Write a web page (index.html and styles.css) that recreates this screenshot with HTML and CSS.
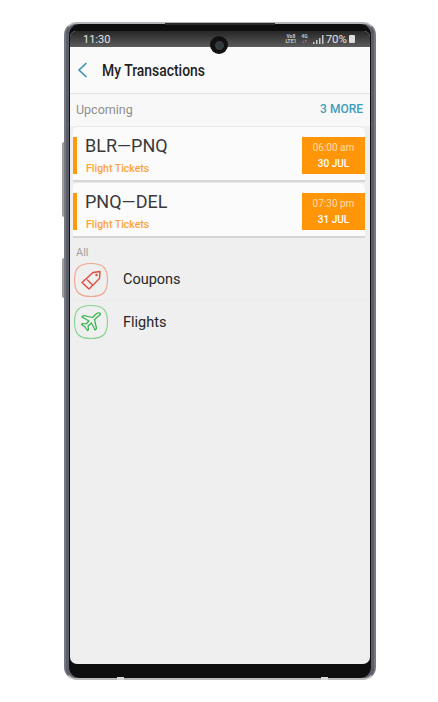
FILE: index.html
```html
<!DOCTYPE html>
<html lang="en">
<head>
  <meta charset="UTF-8" />
  <title>My Transactions</title>
  <meta name="viewport" content="width=device-width, initial-scale=1.0" />
  <link rel="stylesheet" href="styles.css">
</head>
<body>
  <div class="phone">
    <span class="side-key key-top"></span>
    <span class="side-key key-low"></span>
    <span class="top-slit"></span>
    <span class="band-tick tick-left"></span>
    <span class="band-tick tick-right"></span>
    <span class="camera"><span class="lens"></span></span>
    <div class="screen">
      <div class="status-bar">
        <span class="clock">11:30</span>
        <div class="status-icons">
          <span class="tiny">Vo8<br>LTE1</span>
          <span class="tiny">4G<br>↓↑</span>
          <svg class="signal" width="11" height="9" viewBox="0 0 11 9">
            <rect x="0" y="7" width="1.5" height="2" />
            <rect x="3" y="5" width="1.5" height="4" />
            <rect x="6" y="3" width="1.5" height="6" />
            <rect x="9" y="0" width="1.5" height="9" />
          </svg>
          <span class="battery-text">70%</span>
          <span class="battery"></span>
        </div>
      </div>

      <div class="app-header">
        <svg class="back" width="11" height="16" viewBox="0 0 11 16">
          <path d="M9.5 1 L2 8 L9.5 15" fill="none" stroke="#3d93b5" stroke-width="1.6" />
        </svg>
        <h1>My Transactions</h1>
      </div>

      <div class="upcoming-row">
        <span class="upcoming-label">Upcoming</span>
        <span class="more">3 MORE</span>
      </div>

      <div class="card">
        <span class="card-bar"></span>
        <div class="card-info">
          <div class="route">BLR—PNQ</div>
          <div class="kind">Flight Tickets</div>
        </div>
        <div class="when">
          <span class="time">06:00 am</span>
          <span class="date">30 JUL</span>
        </div>
      </div>
      <div class="card">
        <span class="card-bar"></span>
        <div class="card-info">
          <div class="route">PNQ—DEL</div>
          <div class="kind">Flight Tickets</div>
        </div>
        <div class="when">
          <span class="time">07:30 pm</span>
          <span class="date">31 JUL</span>
        </div>
      </div>

      <div class="all-section">
        <div class="all-label">All</div>
        <div class="category">
          <svg class="squircle" width="36" height="36" viewBox="0 0 36 36">
            <path d="M18 1.5 C30 1.5 34.5 6 34.5 18 C34.5 30 30 34.5 18 34.5 C6 34.5 1.5 30 1.5 18 C1.5 6 6 1.5 18 1.5 Z" fill="none" stroke="#eea68f" stroke-width="1.1" />
            <path d="M9 20.5 L20 10.5 L27 9.5 L26.5 16.5 L16 27 Z" fill="none" stroke="#df4b3c" stroke-width="1.4" stroke-linejoin="round" />
            <path d="M14 17.5 L19.5 23" fill="none" stroke="#df4b3c" stroke-width="1.2" />
            <circle cx="23.5" cy="13" r="1.2" fill="#df4b3c" />
          </svg>
          <span class="category-name">Coupons</span>
        </div>
        <div class="category">
          <svg class="squircle" width="36" height="36" viewBox="0 0 36 36">
            <path d="M18 1.5 C30 1.5 34.5 6 34.5 18 C34.5 30 30 34.5 18 34.5 C6 34.5 1.5 30 1.5 18 C1.5 6 6 1.5 18 1.5 Z" fill="none" stroke="#84d48f" stroke-width="1.1" />
            <path d="M27.5 9.5 C26 8.5 24 9 22.5 10.5 L19.5 13.5 L10.5 11.5 L9 13 L16 17 L13 20 L9.5 19.5 L8.5 20.5 L12 23 L14.5 26.5 L15.5 25.5 L15 22 L18.500 19 L22 26 L23.500 24.500 L21.500 15.500 L25 12.500 C26.500 11.500 28 10.500 27.500 9.500 Z" fill="none" stroke="#36b24d" stroke-width="1.2" stroke-linejoin="round" />
          </svg>
          <span class="category-name">Flights</span>
        </div>
      </div>
    </div>
  </div>
</body>
</html>
```

FILE: styles.css
```css
* {
  box-sizing: border-box;
  margin: 0;
  padding: 0;
}

body {
  font-family: Roboto, 'Liberation Sans', sans-serif;
  background: #ffffff;
  height: 702px;
  overflow: hidden;
  padding: 22px 0 0 64px;
}

.phone {
  position: relative;
  width: 312px;
  height: 658px;
  padding: 7px 4px 14px 4px;
  background: #0e0e0e;
  border: 2px solid #77797f;
  border-top-color: #b4b5b9;
  border-bottom-color: #b9b9b9;
  border-radius: 13px;
  box-shadow: inset 3px 0 0 #5c5f6b, inset -3px 0 0 #5c5f6b;
}

.side-key {
  position: absolute;
  left: -4px;
  width: 2px;
  background: #9a9ca1;
  border-radius: 2px 0 0 2px;
}

.key-top {
  top: 118px;
  height: 75px;
}

.key-low {
  top: 234px;
  height: 40px;
}

.top-slit {
  position: absolute;
  top: -1px;
  left: 99px;
  width: 110px;
  height: 2px;
  background: #2a2a2a;
}

.band-tick {
  position: absolute;
  bottom: -2px;
  width: 7px;
  height: 3px;
  background: #d8d8d8;
}

.tick-left {
  left: 51px;
}

.tick-right {
  left: 255px;
}

.camera {
  position: absolute;
  top: 12px;
  left: 144px;
  width: 18px;
  height: 18px;
  border-radius: 50%;
  background: #111;
  display: flex;
  align-items: center;
  justify-content: center;
}

.lens {
  width: 9px;
  height: 9px;
  border-radius: 50%;
  background: #2c3a42;
  border: 2px solid #3a3a3a;
}

.screen {
  height: 100%;
  background: #efefef;
  border-radius: 6px 6px 7px 7px;
  overflow: hidden;
}

.status-bar {
  height: 16px;
  padding: 0 15px 0 13px;
  display: flex;
  align-items: center;
  justify-content: space-between;
  background: linear-gradient(#262626, #5c5c5c);
  color: #e4e4e4;
}

.clock {
  font-size: 11px;
}

.status-icons {
  display: flex;
  align-items: center;
  gap: 5px;
}

.tiny {
  font-size: 5px;
  line-height: 5px;
  font-weight: 700;
  text-align: center;
  color: #c8c8c8;
}

.signal {
  fill: #c8c8c8;
}

.battery-text {
  font-size: 11.5px;
  margin-left: -3px;
}

.battery {
  width: 6px;
  height: 8px;
  background: #dcdcdc;
  border-radius: 1px;
  margin-left: -3px;
}

.app-header {
  height: 47px;
  padding-left: 7px;
  display: flex;
  align-items: center;
  background: #fafafa;
  border-bottom: 1px solid #e2e2e2;
}

.app-header h1 {
  margin-left: 14px;
  font-size: 16px;
  font-weight: 500;
  color: #1f1f1f;
  transform-origin: left center;
  transform: scaleX(0.87);
}

.upcoming-row {
  height: 32px;
  padding: 0 7px 2px 6px;
  display: flex;
  align-items: center;
  justify-content: space-between;
  background: #f8f8f8;
}

.upcoming-label {
  font-size: 12.5px;
  color: #8e8e8e;
}

.more {
  font-size: 12px;
  font-weight: 500;
  color: #3f9dbd;
}

.card {
  height: 56px;
  margin: 0 5px 0 3px;
  padding: 10px 0 6px;
  display: flex;
  background: #fbfbfb;
  border-top: 1px solid #e8e8e8;
  border-bottom: 2px solid #d6d6d6;
  border-radius: 5px 5px 0 0;
}

.card-bar {
  width: 4px;
  background: #ff9a0d;
}

.card-info {
  flex: 1;
  padding-left: 8px;
}

.route {
  font-size: 18px;
  line-height: 18px;
  color: #3a3a3a;
}

.kind {
  margin-top: 7px;
  padding-left: 1px;
  font-size: 10.5px;
  font-weight: 500;
  color: #ffa23a;
}

.when {
  width: 63px;
  display: flex;
  flex-direction: column;
  align-items: center;
  justify-content: center;
  gap: 5px;
  background: #ff9607;
  color: #ffffff;
}

.time {
  font-size: 10px;
  color: #ffdcae;
}

.date {
  font-size: 10px;
  font-weight: 500;
}

.all-section {
  padding: 9px 0 0 3px;
}

.all-label {
  padding-left: 3px;
  font-size: 11px;
  line-height: 12px;
  color: #a2a2a2;
}

.category {
  height: 42px;
  display: flex;
  align-items: center;
  border-bottom: 1px solid #ebebeb;
}

.category:last-child {
  border-bottom: none;
}

.squircle {
  flex: none;
}

.category-name {
  margin-left: 14px;
  font-size: 14.5px;
  color: #262626;
}
```
